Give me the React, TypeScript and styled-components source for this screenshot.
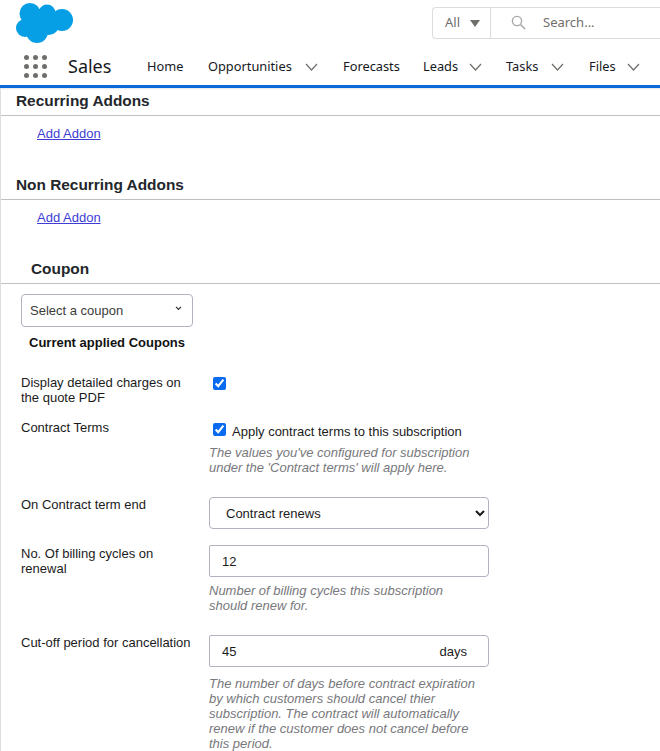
import React from "react";
import styled, { createGlobalStyle } from "styled-components";

const Global = createGlobalStyle`
  html, body { margin: 0; padding: 0; background: #fff; }
  body { width: 660px; height: 751px; overflow: hidden; font-family: "Liberation Sans", Arial, sans-serif; color: #16181d; }
`;

const Page = styled.div`
  width: 660px;
  height: 751px;
  overflow: hidden;
  display: flex;
  flex-direction: column;
`;
const Header = styled.header`
  height: 85px;
  flex: none;
  border-bottom: 3px solid #0b69d9;
  display: flex;
  flex-direction: column;
  font-family: "Noto Sans", sans-serif;
`;
const TopBar = styled.div`
  height: 50px;
  display: flex;
  align-items: flex-start;
  justify-content: space-between;
  padding-left: 16px;
`;
const Logo = styled.svg`
  width: 58px;
  height: 44px;
  display: block;
  margin-top: 1px;
`;
const Search = styled.div`
  width: 227px;
  height: 30px;
  margin-top: 7px;
  border: 1px solid #dcdcdc;
  border-right: 0;
  border-radius: 4px 0 0 4px;
  display: flex;
  font-size: 13px;
  color: #706e6b;
`;
const ScopeBox = styled.div`
  width: 58px;
  border-right: 1px solid #dcdcdc;
  display: flex;
  align-items: center;
  padding: 0 0 2px 12px;
  gap: 10px;
  box-sizing: border-box;
`;
const Caret = styled.span`
  width: 0;
  height: 0;
  margin-top: 3px;
  border-left: 5.5px solid transparent;
  border-right: 5.5px solid transparent;
  border-top: 7px solid #706e6b;
`;
const SearchField = styled.div`
  display: flex;
  align-items: center;
  padding: 0 0 2px 20px;
  gap: 17px;
`;
const NavBar = styled.nav`
  flex: 1;
  display: flex;
  align-items: center;
  padding: 0 0 4px 24px;
  font-size: 12.8px;
  color: #16181d;
`;
const Waffle = styled.div`
  display: grid;
  grid-template-columns: repeat(3, 5px);
  gap: 4px;
  margin: 2px 21px 0 0;
`;
const Dot = styled.span`
  width: 5px;
  height: 5px;
  border-radius: 50%;
  background: #706e6b;
`;
const AppName = styled.span`
  font-size: 18px;
  width: 79px;
`;
const NavItem = styled.span<{ $w: number; $after?: number }>`
  width: ${(p) => p.$w}px;
  margin-right: ${(p) => p.$after ?? 0}px;
  flex: none;
  display: flex;
  align-items: center;
  justify-content: space-between;
  white-space: nowrap;
`;
const Chevron = styled.svg`
  width: 13px;
  height: 8px;
  flex: none;
  margin-top: 2px;
`;

const Content = styled.main`
  flex: 1;
  border-left: 1px solid #dddddd;
  box-shadow: inset 0 3px 2px -2px #e4e4e4;
  overflow: hidden;
`;
const SectionTitle = styled.h2<{ $indent?: number; $top: number }>`
  margin: ${(p) => p.$top}px 0 0 0;
  padding: 0 0 6px ${(p) => p.$indent ?? 15}px;
  border-bottom: 1px solid #bfbfc4;
  font-size: 15.4px;
  line-height: 16px;
  font-weight: 700;
  color: #23262b;
`;
const AddLink = styled.a`
  display: block;
  margin: 9px 0 0 36px;
  font-size: 13px;
  line-height: 17px;
  color: #3d3dd6;
  text-decoration: underline;
`;
const CouponSelect = styled.div`
  width: 172px;
  height: 33px;
  margin: 10px 0 0 20px;
  box-sizing: border-box;
  border: 1px solid #b4b0c0;
  border-radius: 4px;
  padding: 0 10px 1px 8px;
  display: flex;
  align-items: center;
  justify-content: space-between;
  font-size: 13px;
  color: #3c3c3c;
`;
const SmallChevron = styled.svg`
  width: 7px;
  height: 5px;
  margin-bottom: 3px;
`;
const AppliedTitle = styled.div`
  margin: 8px 0 0 28px;
  font-size: 13px;
  line-height: 16px;
  font-weight: 700;
  color: #111;
`;
const Form = styled.div`
  margin-top: 24px;
  padding-left: 20px;
  display: flex;
  flex-direction: column;
`;
const Row = styled.div<{ $gap?: number }>`
  display: grid;
  grid-template-columns: 188px 280px;
  margin-bottom: ${(p) => p.$gap ?? 0}px;
`;
const Label = styled.div<{ $top?: number }>`
  font-size: 13px;
  line-height: 15px;
  color: #1b1b1b;
  padding-top: ${(p) => p.$top ?? 0}px;
  width: 170px;
`;
const Check = styled.input.attrs({ type: "checkbox" })<{ $top: number }>`
  width: 13px;
  height: 13px;
  margin: ${(p) => p.$top}px 0 0;
  accent-color: #0b6bf0;
  flex: none;
`;
const CheckCell = styled.label`
  display: flex;
  align-items: flex-start;
  gap: 6px;
  padding-left: 4px;
  font-size: 13px;
  line-height: 15px;
  color: #1b1b1b;
`;
const CheckText = styled.span`
  padding-top: 4px;
`;
const Help = styled.p<{ $top: number }>`
  margin: ${(p) => p.$top}px 0 0;
  font-size: 13px;
  line-height: 15px;
  font-style: italic;
  color: #77787c;
`;
const FieldSelect = styled.select`
  width: 280px;
  height: 32px;
  box-sizing: border-box;
  border: 1px solid #b4b0c0;
  border-radius: 4px;
  background: #fff;
  padding: 0 12px;
  font: 13px "Liberation Sans", Arial, sans-serif;
  color: #1b1b1b;
  display: block;
`;
const InputBox = styled.div`
  width: 280px;
  height: 32px;
  box-sizing: border-box;
  border: 1px solid #b4b0c0;
  border-radius: 2px 4px 4px 2px;
  display: flex;
  align-items: center;
  justify-content: space-between;
  padding: 0 21px 0 12px;
  font-size: 13px;
  color: #1b1b1b;
`;
const PlainInput = styled.input`
  width: 60px;
  border: 0;
  padding: 0;
  outline: 0;
  background: transparent;
  font: 13px "Liberation Sans", Arial, sans-serif;
  color: #1b1b1b;
`;

const ChevronIcon = () => (
  <Chevron viewBox="0 0 13 8">
    <path d="M1 1l5.5 6L12 1" fill="none" stroke="#706e6b" strokeWidth="1.2" />
  </Chevron>
);

export default function App() {
  return (
    <Page>
      <Global />
      <Header>
        <TopBar>
          <Logo viewBox="0 0 58 44">
            <g fill="#069fe6">
              <circle cx="14" cy="12.5" r="10.5" />
              <circle cx="31" cy="12" r="8.5" />
              <circle cx="46" cy="19" r="11" />
              <circle cx="9" cy="27" r="9" />
              <circle cx="21" cy="31" r="11" />
              <circle cx="33" cy="24" r="10" />
              <circle cx="24" cy="20" r="12" />
            </g>
          </Logo>
          <Search>
            <ScopeBox>
              All
              <Caret />
            </ScopeBox>
            <SearchField>
              <svg width="15" height="15" viewBox="0 0 15 15">
                <circle cx="6" cy="6" r="4.6" fill="none" stroke="#a8a8a8" strokeWidth="1.4" />
                <path d="M9.5 9.5L14 14" stroke="#a8a8a8" strokeWidth="1.6" />
              </svg>
              Search...
            </SearchField>
          </Search>
        </TopBar>
        <NavBar>
          <Waffle>
            {Array.from({ length: 9 }).map((_, i) => (
              <Dot key={i} />
            ))}
          </Waffle>
          <AppName>Sales</AppName>
          <NavItem $w={61}>Home</NavItem>
          <NavItem $w={110} $after={25}>
            Opportunities
            <ChevronIcon />
          </NavItem>
          <NavItem $w={55} $after={25}>Forecasts</NavItem>
          <NavItem $w={59} $after={24}>
            Leads
            <ChevronIcon />
          </NavItem>
          <NavItem $w={58} $after={25}>
            Tasks
            <ChevronIcon />
          </NavItem>
          <NavItem $w={51}>
            Files
            <ChevronIcon />
          </NavItem>
        </NavBar>
      </Header>
      <Content>
        <SectionTitle $top={5}>Recurring Addons</SectionTitle>
        <AddLink href="#">Add Addon</AddLink>
        <SectionTitle $top={35}>Non Recurring Addons</SectionTitle>
        <AddLink href="#">Add Addon</AddLink>
        <SectionTitle $top={35} $indent={30}>Coupon</SectionTitle>
        <CouponSelect>
          Select a coupon
          <SmallChevron viewBox="0 0 8 6">
            <path d="M1 1l3 3 3-3" fill="none" stroke="#333" strokeWidth="1.5" />
          </SmallChevron>
        </CouponSelect>
        <AppliedTitle>Current applied Coupons</AppliedTitle>
        <Form>
          <Row $gap={15}>
            <Label>Display detailed charges on the quote PDF</Label>
            <CheckCell>
              <Check $top={2} defaultChecked />
            </CheckCell>
          </Row>
          <Row $gap={22}>
            <Label>Contract Terms</Label>
            <div>
              <CheckCell>
                <Check $top={3} defaultChecked />
                <CheckText>Apply contract terms to this subscription</CheckText>
              </CheckCell>
              <Help $top={6}>
                The values you've configured for subscription
                <br />
                under the 'Contract terms' will apply here.
              </Help>
            </div>
          </Row>
          <Row $gap={16}>
            <Label>On Contract term end</Label>
            <FieldSelect defaultValue="renews">
              <option value="renews">Contract renews</option>
            </FieldSelect>
          </Row>
          <Row $gap={22}>
            <Label $top={1}>No. Of billing cycles on renewal</Label>
            <div>
              <InputBox>
                <PlainInput defaultValue="12" />
              </InputBox>
              <Help $top={6}>
                Number of billing cycles this subscription
                <br />
                should renew for.
              </Help>
            </div>
          </Row>
          <Row>
            <Label>Cut-off period for cancellation</Label>
            <div>
              <InputBox>
                <PlainInput defaultValue="45" />
                days
              </InputBox>
              <Help $top={9}>
                The number of days before contract expiration
                <br />
                by which customers should cancel thier
                <br />
                subscription. The contract will automatically
                <br />
                renew if the customer does not cancel before
                <br />
                this period.
              </Help>
            </div>
          </Row>
        </Form>
      </Content>
    </Page>
  );
}
